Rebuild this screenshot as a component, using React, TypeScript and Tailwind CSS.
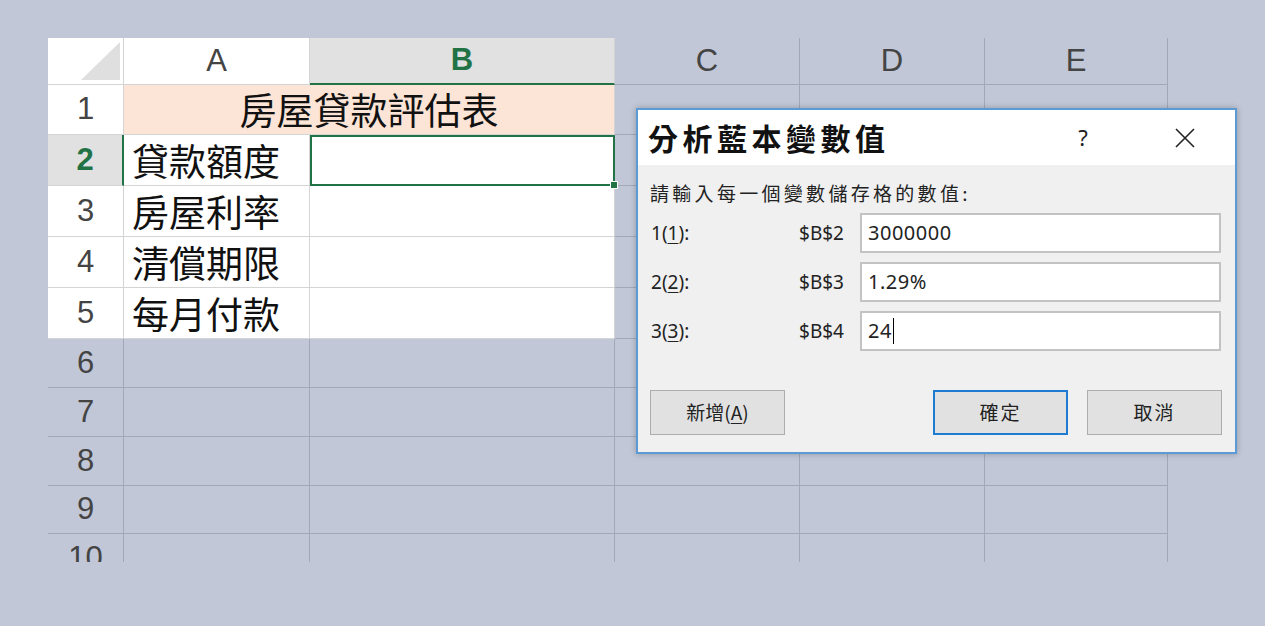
import type { ReactNode } from "react";

const HEAD = "font-['Liberation_Sans',Arial,sans-serif] text-[31px] text-[#444]";
const CJK = "font-['Noto_Sans_CJK_TC','Noto_Sans',sans-serif]";
const UI = "font-['Noto_Sans','Noto_Sans_CJK_TC',sans-serif]";

// white (used) cells vs. the grey-blue area outside the used range
const W = "bg-white border-r border-b border-[#d4d4d4]";
const G = "border-r border-b border-[#a2a8b7]";

function Cell({ cls, children, left }: { cls: string; children?: ReactNode; left?: boolean }) {
  return (
    <div className={`flex items-center whitespace-nowrap ${left ? "justify-start pl-[8px]" : "justify-center"} ${cls}`}>
      {children}
    </div>
  );
}

function Outside() {
  return (
    <>
      <Cell cls={G} />
      <Cell cls={G} />
      <Cell cls={G} />
    </>
  );
}

const labels = ["房屋利率", "清償期限", "每月付款"];

function Sheet() {
  return (
    <div className="h-[524px] w-fit overflow-hidden">
      <div className="grid grid-cols-[76px_186px_305px_185px_185px_183px] grid-rows-[47px_50px_51px_51px_51px_51px_49px_49px_49px_48px_50px]">
        {/* column headers */}
        <div className={`relative ${W}`}>
          <div className="absolute bottom-[4px] right-[3px] h-[38px] w-[39px] bg-[#dfdfdf] [clip-path:polygon(100%_0,100%_100%,0_100%)]" />
        </div>
        <Cell cls={`${W} ${HEAD}`}>A</Cell>
        <Cell cls={`bg-[#e1e1e1] border-r border-[#d4d4d4] border-b-2 border-b-[#217346] font-['Liberation_Sans',Arial,sans-serif] text-[31px] font-bold text-[#217346]`}>
          B
        </Cell>
        <Cell cls={`${G} ${HEAD}`}>C</Cell>
        <Cell cls={`${G} ${HEAD}`}>D</Cell>
        <Cell cls={`${G} ${HEAD}`}>E</Cell>

        {/* row 1 */}
        <Cell cls={`${W} ${HEAD}`}>1</Cell>
        <div className={`col-span-2 flex items-center justify-center border-r border-b border-[#d4d4d4] bg-[#fce4d6] text-[37px] leading-none text-[#111] ${CJK}`}>
          房屋貸款評估表
        </div>
        <Outside />

        {/* row 2 (selected) */}
        <Cell cls={`bg-[#e1e1e1] border-b border-b-[#d4d4d4] border-r-2 border-r-[#217346] font-['Liberation_Sans',Arial,sans-serif] text-[31px] font-bold text-[#217346]`}>
          2
        </Cell>
        <Cell cls={`${W} text-[37px] leading-none text-[#111] ${CJK}`} left>
          貸款額度
        </Cell>
        <div className="relative border-2 border-[#217346] bg-white">
          <div className="absolute -bottom-[5px] -right-[5px] h-[8px] w-[8px] border border-white bg-[#217346]" />
        </div>
        <Outside />

        {/* rows 3-5 */}
        {labels.map((t, i) => (
          <div key={t} className="contents">
            <Cell cls={`${W} ${HEAD}`}>{i + 3}</Cell>
            <Cell cls={`${W} text-[37px] leading-none text-[#111] ${CJK}`} left>
              {t}
            </Cell>
            <Cell cls={W} />
            <Outside />
          </div>
        ))}

        {/* rows 6-10 */}
        {[6, 7, 8, 9, 10].map((n) => (
          <div key={n} className="contents">
            <Cell cls={`${G} ${HEAD}`}>{n}</Cell>
            <Cell cls={G} />
            <Cell cls={G} />
            <Outside />
          </div>
        ))}
      </div>
    </div>
  );
}

function Field({ num, cell, value, caret }: { num: string; cell: string; value: string; caret?: boolean }) {
  return (
    <div className="flex h-[40px] items-center">
      <div className={`w-[100px] pl-[1px] text-[19px] text-[#222] ${UI}`}>
        {num}(<span className="underline underline-offset-[3px]">{num}</span>):
      </div>
      <div className={`w-[94px] text-right text-[19px] text-[#222] ${UI}`}>{cell}</div>
      <div className={`ml-[16px] flex h-[40px] w-[361px] items-center border-2 border-[#c3c3c3] bg-white pl-[6px] text-[20px] tracking-[0.5px] text-[#222] ${UI}`}>
        {value}
        {caret && <span className="ml-[1px] h-[26px] w-[1.5px] bg-black" />}
      </div>
    </div>
  );
}

function Dialog() {
  return (
    <div className="absolute left-[636px] top-[108px] flex h-[346px] w-[601px] flex-col border-2 border-[#5c9ad6] bg-[#f0f0f0] shadow-[0_0_6px_rgba(0,0,0,0.25)]">
      <div className="flex h-[55px] items-center bg-white pl-[10px] pr-[25px]">
        <div className={`flex-1 text-[30px] font-bold tracking-[4.5px] text-[#111] ${CJK}`}>分析藍本變數值</div>
        <div className={`w-[40px] text-center text-[22px] text-[#222] ${UI}`}>?</div>
        <div className="ml-[57px] flex w-[50px] justify-center">
          <svg width="22" height="22" viewBox="0 0 22 22" fill="none" stroke="#222" strokeWidth="1.6">
            <path d="M2 2 L20 20 M20 2 L2 20" />
          </svg>
        </div>
      </div>

      <div className="flex flex-1 flex-col pl-[12px] pr-[13px] pt-[16px]">
        <div className={`text-[19px] leading-[24px] tracking-[3.3px] text-[#222] ${CJK}`}>
          請輸入每一個變數儲存格的數值:
        </div>
        <div className="mt-[8px] flex flex-col gap-[9px]">
          <Field num="1" cell="$B$2" value="3000000" />
          <Field num="2" cell="$B$3" value="1.29%" />
          <Field num="3" cell="$B$4" value="24" caret />
        </div>

        <div className="mt-[39px] flex items-center">
          <button className={`h-[45px] w-[135px] border border-[#adadad] bg-[#e1e1e1] text-[19px] text-[#222] ${CJK}`}>
            新增(<span className="underline underline-offset-[3px]">A</span>)
          </button>
          <button className={`ml-auto h-[45px] w-[135px] border-2 border-[#1f7ad1] bg-[#e1e1e1] text-[19px] tracking-[2px] text-[#222] ${CJK}`}>
            確定
          </button>
          <button className={`ml-[19px] h-[45px] w-[135px] border border-[#adadad] bg-[#e1e1e1] text-[19px] tracking-[2px] text-[#222] ${CJK}`}>
            取消
          </button>
        </div>
      </div>
    </div>
  );
}

export default function App() {
  return (
    <div className="relative h-[626px] w-[1265px] overflow-hidden bg-[#c1c7d6]">
      <div className="pl-[48px] pt-[38px]">
        <Sheet />
      </div>
      <Dialog />
    </div>
  );
}
